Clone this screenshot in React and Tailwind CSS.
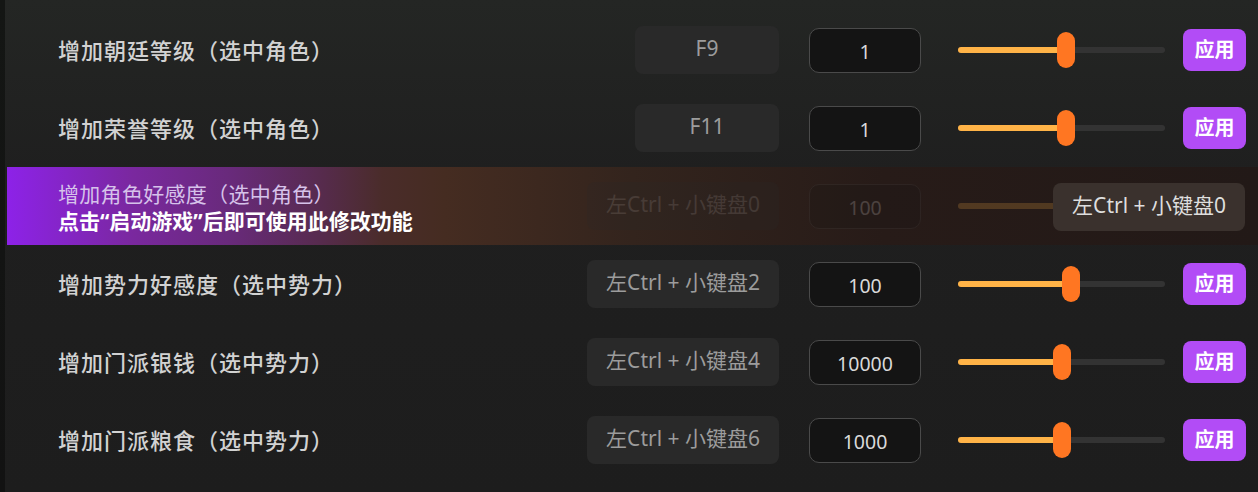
import React from "react";

const rows = [
  { label: "增加朝廷等级（选中角色）", hotkey: "F9", value: "1", pos: 108 },
  { label: "增加荣誉等级（选中角色）", hotkey: "F11", value: "1", pos: 108 },
  { label: "增加角色好感度（选中角色）", hotkey: "左Ctrl + 小键盘0", value: "100", pos: 108, locked: true },
  { label: "增加势力好感度（选中势力）", hotkey: "左Ctrl + 小键盘2", value: "100", pos: 113 },
  { label: "增加门派银钱（选中势力）", hotkey: "左Ctrl + 小键盘4", value: "10000", pos: 104 },
  { label: "增加门派粮食（选中势力）", hotkey: "左Ctrl + 小键盘6", value: "1000", pos: 104 },
];

const Slider = ({ pos }) => (
  <div className="relative ml-[37px] w-[207px] h-[36px] flex items-center">
    <div className="w-full h-[6px] rounded-full bg-[#333333]" />
    <div className="absolute left-0 h-[6px] rounded-full bg-[#ffb347]" style={{ width: pos }} />
    <div
      className="absolute top-0 w-[18px] h-[36px] rounded-full bg-[#ff7622]"
      style={{ left: pos - 9 }}
    />
  </div>
);

const Controls = ({ row }) => (
  <div className="flex items-center">
    <div className="min-w-[144px] h-[48px] px-[19px] flex items-center justify-center rounded-[8px] bg-[#292929] text-[21px] text-[#9c9c9c] pb-[2px]">
      {row.hotkey}
    </div>
    <div className="ml-[30px] w-[112px] h-[45px] flex items-center justify-center rounded-[10px] border-[1.5px] border-[#4a4a4a] bg-[#141414] text-[19.5px] text-[#dadada] pt-[3px]">
      {row.value}
    </div>
    <Slider pos={row.pos} />
  </div>
);

const Row = ({ row }) => (
  <div className="h-[78px] flex items-center pl-[53px] pr-[12px]">
    <div className="flex-1 text-[22px] tracking-[1px] font-medium text-[#d2d2d2]">{row.label}</div>
    <Controls row={row} />
    <button className="ml-[18px] w-[63px] h-[42px] rounded-[8px] bg-[#b24cf6] text-white text-[20px] font-semibold">
      应用
    </button>
  </div>
);

const LockedRow = ({ row }) => (
  <div className="relative ml-[2px] h-[78px] flex items-center pl-[51px] pr-[12px] bg-[linear-gradient(to_right,#8d22e8_0%,#7a289f_10%,#682a7a_18%,#572b4e_25%,#4a2c2a_30%,#452c21_35%,#33241d_50%,#271b18_70%,#221917_100%)]">
    <div className="flex-1 flex flex-col pt-[2px]">
      <div className="text-[21px] leading-[28px] tracking-[0.3px] text-[#d6c2ea]">{row.label}</div>
      <div className="text-[21px] leading-[26px] font-bold text-white">点击“启动游戏”后即可使用此修改功能</div>
    </div>
    <div className="flex items-center opacity-20">
      <Controls row={row} />
      <div className="ml-[18px] w-[63px] h-[42px]" />
    </div>
    <div className="absolute right-[13px] top-[16px] h-[48px] px-[19px] flex items-center rounded-[8px] bg-[#3a312d] text-[21px] text-[#dedede] pb-[2px]">
      {row.hotkey}
    </div>
  </div>
);

export default function App() {
  return (
    <div
      className="w-[1258px] h-[492px] flex overflow-hidden bg-[#1d1d1d]"
      style={{ fontFamily: '"Noto Sans", "Noto Sans CJK SC", sans-serif' }}
    >
      <div className="w-[5px] bg-[linear-gradient(to_bottom,#141614,#121212)]" />
      <div className="flex-1 flex flex-col pt-[11px] bg-[linear-gradient(to_bottom,#242624_0%,#1f1f1f_35%,#1d1d1d_100%)]">
        {rows.map((row, i) =>
          row.locked ? <LockedRow key={i} row={row} /> : <Row key={i} row={row} />
        )}
      </div>
    </div>
  );
}
